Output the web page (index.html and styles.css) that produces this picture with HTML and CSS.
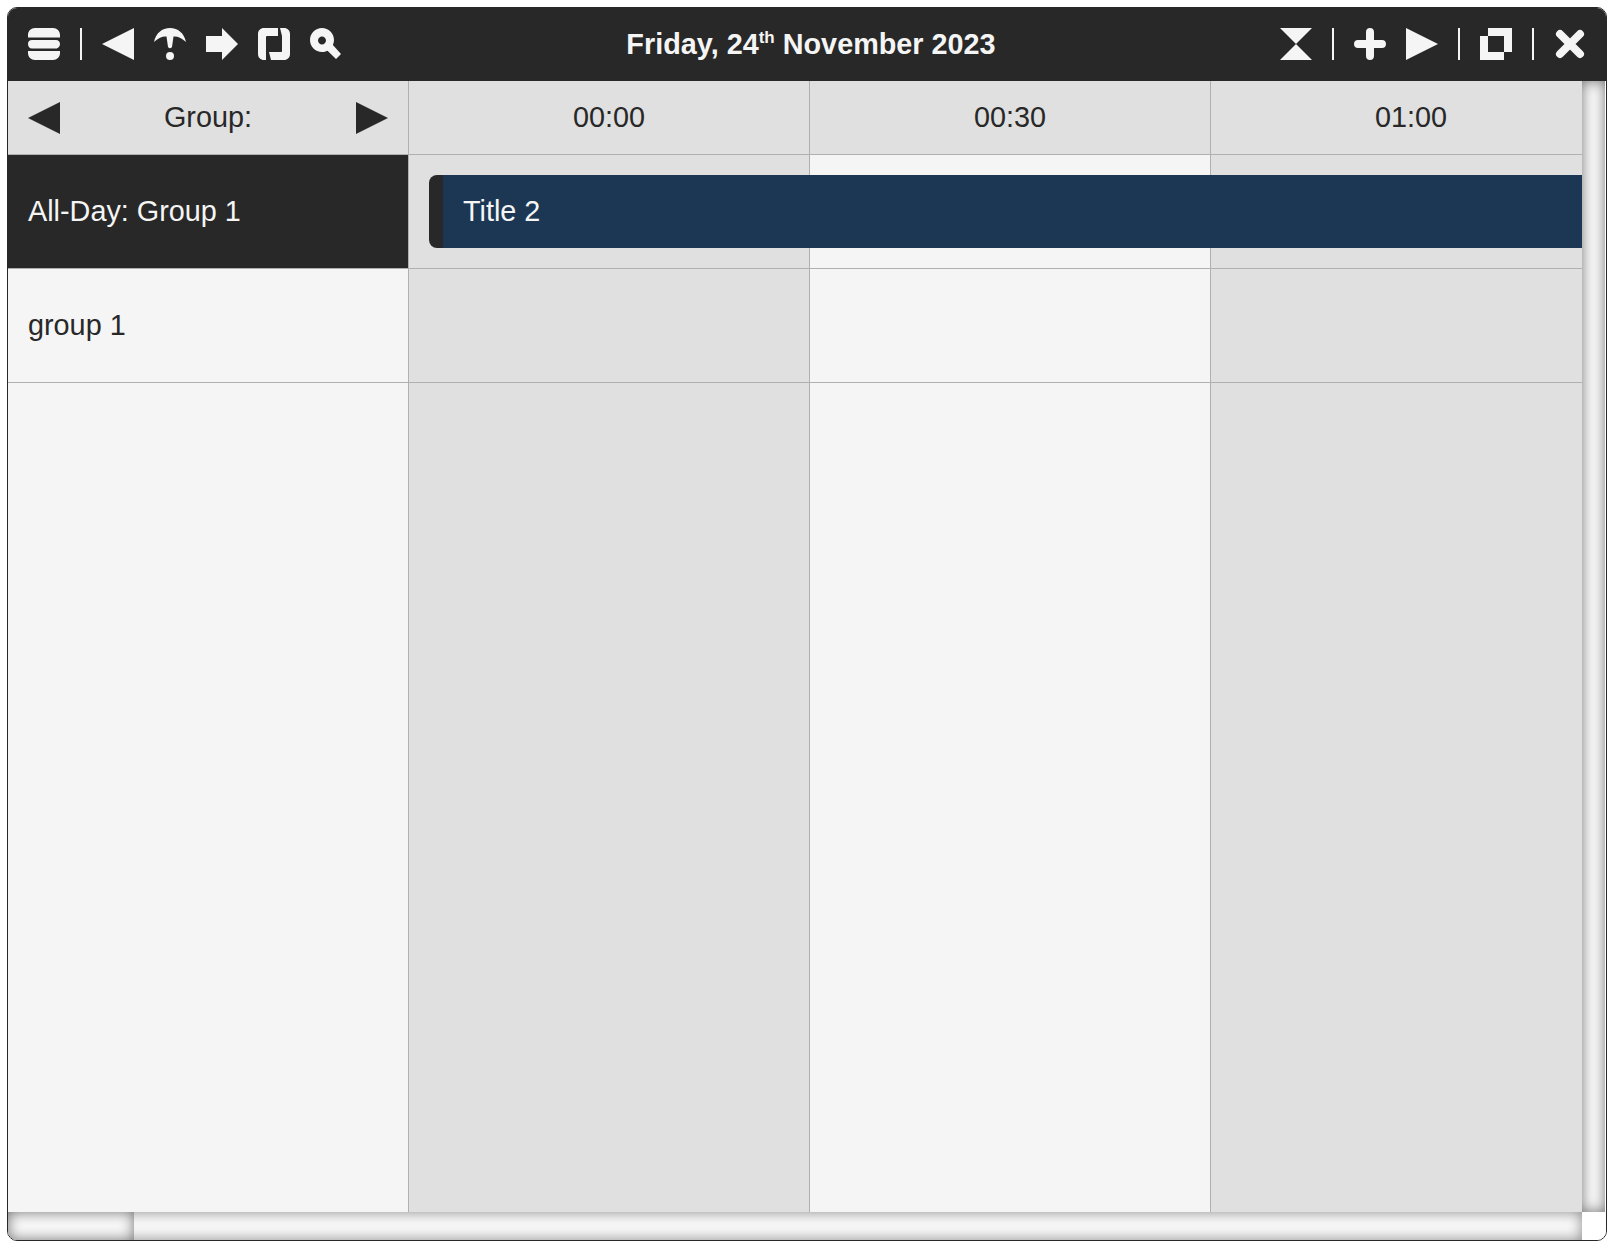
FILE: index.html
```html
<!DOCTYPE html>
<html lang="en">

<head>
    <meta charset="UTF-8">
    <title>Calendar</title>
    <link rel="stylesheet" href="styles.css">
</head>

<body>
    <div class="calendar">
        <div class="toolbar">
            <div class="tools">
                <svg class="icon" viewBox="0 0 32 32"><path d="M7 0H25C29 0 32 3 32 7V9.500H0V7C0 3 3 0 7 0ZM4 12H28C30.500 12 32 14 32 16S30.500 20.500 28 20.500H4C1.500 20.500 0 18.500 0 16S1.500 12 4 12ZM0 23H32V25C32 29 29 32 25 32H7C3 32 0 29 0 25Z"/></svg>
                <span class="sep"></span>
                <svg class="icon" viewBox="0 0 32 32"><path d="M32 0V32L0 16Z"/></svg>
                <svg class="icon" viewBox="0 0 32 32"><path d="M16 0C24 0 30 5 32 14C27 9.500 23 8 19.500 8.500L18 19Q16 21.500 14 19L12.500 8.500C9 8 5 9.500 0 14C2 5 8 0 16 0Z"/><circle cx="16" cy="28" r="4"/></svg>
                <svg class="icon" viewBox="0 0 32 32"><path d="M0 8H16V0L32 16L16 32V24H0Z"/></svg>
                <svg class="icon" viewBox="0 0 32 32"><path d="M6 0H20V8H9Q8 8 8 9V32H6C2.500 32 0 29.500 0 26V6C0 2.500 2.500 0 6 0Z"/><path d="M22 0H26C29.500 0 32 2.500 32 6V26C32 29.500 29.500 32 26 32H13L11 24H23C23.600 24 24 23.600 24 23V8Z"/></svg>
                <svg class="icon" viewBox="0 0 32 32"><path fill-rule="evenodd" d="M12 0C18.600 0 24 5.400 24 12C24 13.800 23.600 15.500 22.900 17L31 26L26 31L17.500 22.700C15.800 23.500 14 24 12 24C5.400 24 0 18.600 0 12S5.400 0 12 0ZM12 8.500C9.800 8.500 8 10.300 8 12.500S9.800 16.500 12 16.500S16 14.700 16 12.500S14.200 8.500 12 8.500Z"/></svg>
            </div>
            <div class="title">Friday, 24<sup>th</sup> November 2023</div>
            <div class="tools">
                <svg class="icon" viewBox="0 0 32 32"><path d="M0 0H32L16 16L32 32H0L16 16Z"/></svg>
                <span class="sep"></span>
                <svg class="icon" viewBox="0 0 32 32"><path d="M16 0C18.500 0 20 1.500 20 4V12H28C30.500 12 32 13.500 32 16S30.500 20 28 20H20V28C20 30.500 18.500 32 16 32S12 30.500 12 28V20H4C1.500 20 0 18.500 0 16S1.500 12 4 12H12V4C12 1.500 13.500 0 16 0Z"/></svg>
                <svg class="icon" viewBox="0 0 32 32"><path d="M0 0V32L32 16Z"/></svg>
                <span class="sep"></span>
                <svg class="icon" viewBox="0 0 32 32"><path fill-rule="evenodd" d="M8 0H32V24H24V32H0V8H8ZM8 8V24H24V8Z"/></svg>
                <span class="sep"></span>
                <svg class="icon icon-close" viewBox="0 0 32 32"><path d="M6 6L26 26M26 6L6 26"/></svg>
            </div>
        </div>
        <div class="body">
            <div class="grid">
                <div class="col col-labels">
                    <div class="cell head group-head">
                        <svg class="icon dark" viewBox="0 0 32 32"><path d="M32 0V32L0 16Z"/></svg>
                        <span>Group:</span>
                        <svg class="icon dark" viewBox="0 0 32 32"><path d="M0 0V32L32 16Z"/></svg>
                    </div>
                    <div class="cell row all-day-label">All-Day: Group 1</div>
                    <div class="cell row">group 1</div>
                </div>
                <div class="col col-even">
                    <div class="cell head">00:00</div>
                    <div class="cell row"></div>
                    <div class="cell row"></div>
                </div>
                <div class="col">
                    <div class="cell head">00:30</div>
                    <div class="cell row"></div>
                    <div class="cell row"></div>
                </div>
                <div class="col col-even">
                    <div class="cell head">01:00</div>
                    <div class="cell row"></div>
                    <div class="cell row"></div>
                </div>
                <div class="event">Title 2</div>
            </div>
            <div class="scroll-v"></div>
        </div>
        <div class="bottom">
            <div class="scroll-h">
                <div class="thumb"></div>
            </div>
            <div class="corner"></div>
        </div>
    </div>
</body>

</html>
```

FILE: styles.css
```css
* {
    box-sizing: border-box;
}

html,
body {
    height: 100%;
}

body {
    margin: 0;
    padding: 7px 7px 8px 7px;
    background-color: #fff;
    font-family: "Liberation Sans", Arial, sans-serif;
    font-size: 28.8px;
    color: #282828;
}

.calendar {
    display: flex;
    flex-direction: column;
    height: 1234px;
    width: 1600px;
    border: 1px solid #282828;
    border-radius: 10px;
    overflow: hidden;
}

.toolbar {
    display: flex;
    justify-content: space-between;
    align-items: center;
    height: 73px;
    padding: 20px 20px 21px;
    background-color: #282828;
}

.tools {
    display: flex;
    align-items: center;
    gap: 20px;
}

.icon {
    display: block;
    width: 32px;
    height: 32px;
    fill: #f5f5f5;
}

.icon.dark {
    fill: #282828;
}

.icon-close {
    fill: none;
    stroke: #f5f5f5;
    stroke-width: 8;
    stroke-linecap: round;
}

.sep {
    width: 2px;
    height: 32px;
    background-color: #f5f5f5;
}

.title {
    font-weight: bold;
    color: #f5f5f5;
    white-space: nowrap;
}

.title sup {
    font-size: 17px;
    line-height: 0;
}

.body {
    display: flex;
    flex: 1;
    min-height: 0;
}

.grid {
    position: relative;
    display: flex;
    flex: 1;
    overflow: hidden;
    background-color: #f5f5f5;
}

.col {
    flex: none;
    width: 401px;
    border-right: 1px solid #b0b0b0;
}

.col-even {
    background-color: #e0e0e0;
}

.cell {
    display: flex;
    align-items: center;
    padding: 0 20px;
    border-bottom: 1px solid #b0b0b0;
}

.head {
    justify-content: center;
    height: 74px;
    background-color: #e0e0e0;
}

.group-head {
    justify-content: space-between;
}

.row {
    height: 114px;
}

.all-day-label {
    background-color: #282828;
    color: #f5f5f5;
}

.event {
    position: absolute;
    left: 421px;
    right: 0;
    top: 94px;
    height: 73px;
    padding-left: 20px;
    border-left: 14px solid #282828;
    border-radius: 8px 0 0 8px;
    background-color: #1c3753;
    color: #f5f5f5;
    line-height: 73px;
}

.scroll-v {
    flex: none;
    width: 23px;
    margin-right: 1px;
    box-shadow: inset 0 0 14px rgba(0, 0, 0, 0.55);
    background-color: #fafafa;
}

.bottom {
    display: flex;
    flex: none;
    height: 28px;
}

.scroll-h {
    flex: 1;
    box-shadow: inset 0 0 14px rgba(0, 0, 0, 0.45);
    background-color: #f8f8f8;
}

.thumb {
    width: 126px;
    height: 100%;
    box-shadow: inset 0 0 14px rgba(0, 0, 0, 0.55);
    background-color: #f8f8f8;
}

.corner {
    flex: none;
    width: 24px;
    background-color: #fff;
}
```
